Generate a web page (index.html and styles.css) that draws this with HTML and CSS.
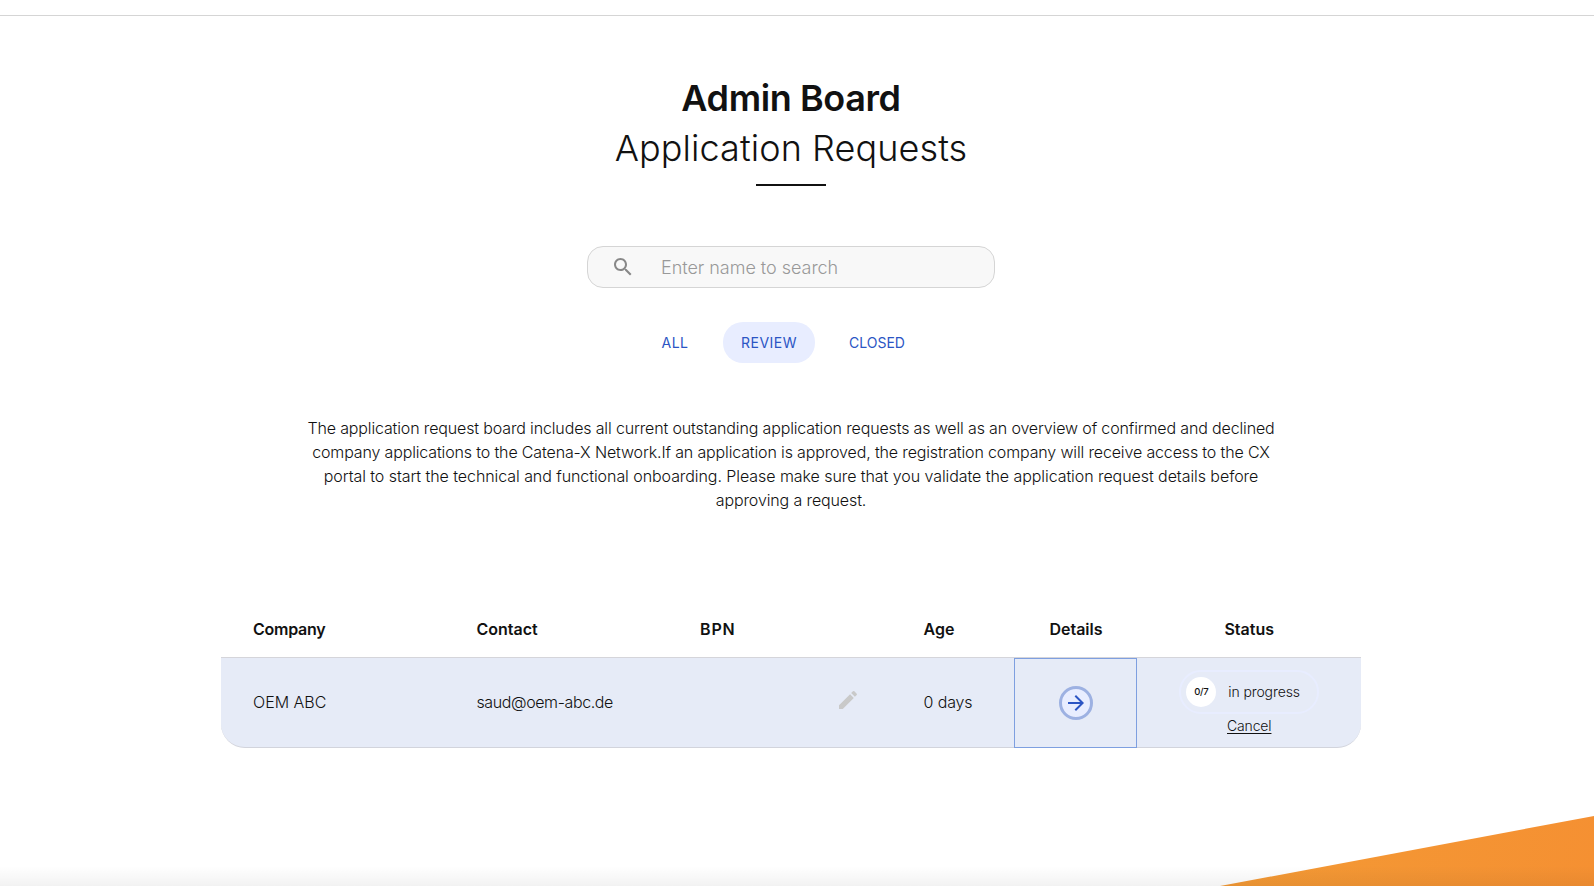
FILE: index.html
```html
<!DOCTYPE html>
<html lang="en">
<head>
<meta charset="utf-8">
<title>Admin Board</title>
<link rel="stylesheet" href="styles.css">
</head>
<body>
<div class="topbar"></div>
<main class="page">
  <header class="heading">
    <h1 class="title">Admin Board</h1>
    <h2 class="subtitle">Application Requests</h2>
    <div class="rule"></div>
  </header>
  <div class="search">
    <svg class="search-icon" viewBox="0 0 24 24"><path d="M15.5 14h-.79l-.28-.27C15.41 12.59 16 11.11 16 9.5 16 5.91 13.09 3 9.5 3S3 5.91 3 9.5 5.91 16 9.5 16c1.61 0 3.09-.59 4.23-1.57l.27.28v.79l5 4.99L20.49 19l-4.99-5zm-6 0C7.01 14 5 11.99 5 9.5S7.01 5 9.5 5 14 7.01 14 9.5 11.99 14 9.5 14z"/></svg>
    <span class="placeholder">Enter name to search</span>
  </div>
  <nav class="tabs">
    <a class="tab tab-all">ALL</a>
    <a class="tab tab-active">REVIEW</a>
    <a class="tab tab-closed">CLOSED</a>
  </nav>
  <p class="intro">
    <span class="line">The application request board includes all current outstanding application requests as well as an overview of confirmed and declined</span>
    <span class="line">company applications to the Catena-X Network.If an application is approved, the registration company will receive access to the CX</span>
    <span class="line line-loose">portal to start the technical and functional onboarding. Please make sure that you validate the application request details before</span>
    <span class="line line-last">approving a request.</span>
  </p>
  <section class="table">
    <div class="row head">
      <div class="cell company">Company</div>
      <div class="cell">Contact</div>
      <div class="cell bpn-label">BPN</div>
      <div class="cell">Age</div>
      <div class="cell center">Details</div>
      <div class="cell center">Status</div>
    </div>
    <div class="row body">
      <div class="cell">OEM ABC</div>
      <div class="cell email">saud@oem-abc.de</div>
      <div class="cell bpn"><svg class="edit" viewBox="0 0 24 24"><path d="M3 17.25V21h3.75L17.81 9.94l-3.75-3.75L3 17.25zM20.71 7.04c.39-.39.39-1.02 0-1.41l-2.34-2.34a.996.996 0 0 0-1.41 0l-1.83 1.83 3.75 3.75 1.83-1.83z"/></svg></div>
      <div class="cell age">0 days</div>
      <div class="cell center focused"><span class="go"><svg viewBox="0 0 24 24"><path d="m12 4-1.41 1.41L16.17 11H4v2h12.17l-5.58 5.59L12 20l8-8z"/></svg></span></div>
      <div class="cell status">
        <div class="progress"><span class="count">0/7</span><span class="state">in progress</span></div>
        <a class="cancel">Cancel</a>
      </div>
    </div>
  </section>
</main>
<div class="corner"></div>
<div class="fade"></div>
</body>
</html>
```
FILE: styles.css
```css
* { box-sizing: border-box; }
body { margin: 0; height: 886px; overflow: hidden; position: relative; background: #fff; color: #111; font-family: Inter, "Liberation Sans", sans-serif; font-weight: 300; font-size: 16px; }
.topbar { height: 16px; border-bottom: 1px solid #d5d5d5; }
.page { width: 1582px; display: flex; flex-direction: column; align-items: center; }
.heading { padding-top: 57px; display: flex; flex-direction: column; align-items: center; }
.title, .subtitle { margin: 0; font-size: 36px; line-height: 50px; white-space: nowrap; }
.title { font-weight: 600; letter-spacing: -0.4px; }
.subtitle { font-weight: 300; letter-spacing: 0.08px; }
.rule { width: 70px; height: 2px; margin-top: 11px; background: #111; }
.search { width: 408px; height: 42px; margin-top: 60px; padding-left: 23px; display: flex; align-items: center; border: 1px solid #d5d5d5; border-radius: 16px; background: #f8f8f8; }
.search-icon { width: 24px; height: 24px; fill: #888; }
.placeholder { margin-left: 26px; font-size: 18px; font-weight: 300; letter-spacing: -0.03px; color: #999; }
.tabs { height: 41px; margin-top: 34px; display: flex; gap: 17px; margin-right: 16px; }
.tab { display: flex; align-items: center; justify-content: center; font-size: 14px; font-weight: 400; color: #2b55c4; border-radius: 20px; }
.tab-all { width: 62px; letter-spacing: 0.5px; }
.tab-active { width: 92px; background: #e8edff; letter-spacing: 0.5px; }
.tab-closed { width: 90px; }
.intro { margin: 53px 0 0; display: flex; flex-direction: column; align-items: center; line-height: 24px; }
.line { white-space: nowrap; letter-spacing: -0.143px; }
.line-loose { letter-spacing: -0.065px; }
.line-last { letter-spacing: -0.12px; }
.table { width: 1140px; margin-top: 88px; }
.row { display: grid; grid-template-columns: 2fr 2fr 2fr 1.1fr 1.1fr 2fr; }
.head { height: 58px; border-bottom: 1px solid #d5d5da; font-weight: 600; }
.body { height: 90px; background: #e6ebf7; border-bottom: 1px solid #d2d4dc; border-radius: 0 0 24px 24px; }
.cell { display: flex; align-items: center; padding-left: 32px; white-space: nowrap; }
.body .cell { padding-bottom: 2px; }
.cell.center { justify-content: center; padding-left: 0; }
.company { letter-spacing: -0.25px; }
.bpn-label { letter-spacing: 0.8px; }
.email { letter-spacing: -0.4px; }
.age { letter-spacing: -0.15px; }
.body .bpn { justify-content: flex-end; padding: 0 32px 6px 0; }
.edit { width: 24px; height: 24px; fill: #c9c9c9; }
.body .focused { border: 1px solid #7e9fe0; margin: 0 0 -1px -1px; padding: 0 0 0 1px; }
.go { width: 34px; height: 34px; border: 3px solid #9db1e2; border-radius: 50%; display: flex; align-items: center; justify-content: center; background: #e8edff; }
.go svg { width: 24px; height: 24px; flex: none; fill: #2b55c4; }
.body .status { flex-direction: column; padding: 12px 0 0; }
.progress { width: 140px; height: 44px; border: 2px solid #e8edff; border-radius: 22px; display: flex; align-items: center; padding-left: 5px; font-size: 14px; }
.count { width: 30px; height: 30px; padding-bottom: 1px; border-radius: 50%; background: #fff; font-size: 9.5px; font-weight: 500; letter-spacing: -0.4px; display: flex; align-items: center; justify-content: center; }
.state { margin-left: 12px; padding-bottom: 2px; letter-spacing: -0.1px; }
.cancel { font-size: 14px; line-height: 20px; margin-top: 2px; letter-spacing: -0.15px; text-decoration: underline; text-underline-offset: 2px; }
.corner { position: absolute; right: 0; bottom: 0; width: 374px; height: 70px; background: linear-gradient(100deg, #f39a35, #f59032); clip-path: polygon(0 100%, 100% 0, 100% 100%); }
.fade { position: absolute; left: 0; right: 0; bottom: 0; height: 20px; background: linear-gradient(rgba(0,0,0,0), rgba(0,0,0,.05)); }
```
